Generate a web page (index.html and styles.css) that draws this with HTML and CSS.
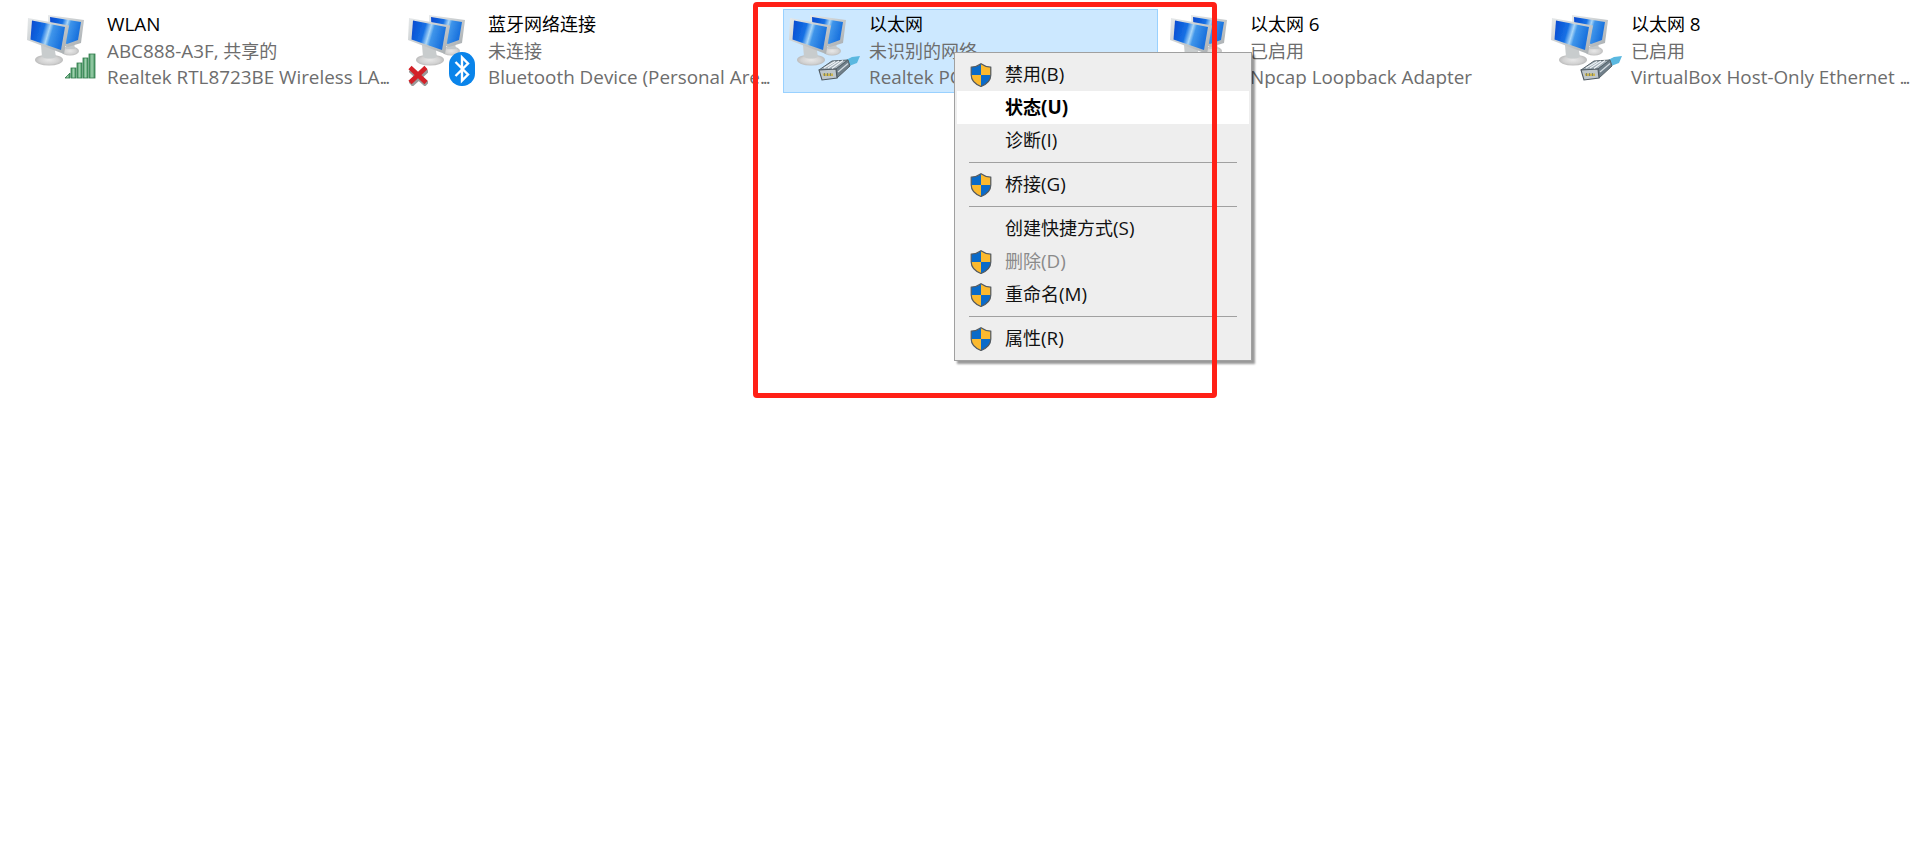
FILE: index.html
```html
<!DOCTYPE html>
<html lang="zh-CN">
<head>
<meta charset="utf-8">
<title>网络连接</title>
<link rel="stylesheet" href="styles.css">
</head>
<body>
<svg class="defs" aria-hidden="true">
  <defs>
    <linearGradient id="screen" x1="0" y1="0" x2="1" y2="0.25">
      <stop offset="0" stop-color="#0a48cf"/>
      <stop offset="0.42" stop-color="#1470e4"/>
      <stop offset="0.58" stop-color="#a9d6f7"/>
      <stop offset="0.68" stop-color="#3f95ea"/>
      <stop offset="1" stop-color="#1a72de"/>
    </linearGradient>
    <linearGradient id="frame" x1="0" y1="0" x2="1" y2="1">
      <stop offset="0" stop-color="#e6e9ea"/>
      <stop offset="1" stop-color="#a8adb0"/>
    </linearGradient>
    <radialGradient id="base">
      <stop offset="0" stop-color="#e8e8e8"/>
      <stop offset="0.7" stop-color="#d2d2d2"/>
      <stop offset="1" stop-color="#bcbcbc"/>
    </radialGradient>
    <linearGradient id="bar" x1="0" y1="0" x2="1" y2="0">
      <stop offset="0" stop-color="#3f8f5c"/>
      <stop offset="0.5" stop-color="#9dd0ac"/>
      <stop offset="1" stop-color="#3f8f5c"/>
    </linearGradient>
    <clipPath id="shieldclip"><path d="M11 .8C8 3 5 4 1.2 4.2V12C1.2 18 6 21.5 11 23.5 16 21.5 20.8 18 20.8 12V4.2C17 4 14 3 11 .8Z"/></clipPath>
    <filter id="soft" x="-5%" y="-5%" width="110%" height="110%"><feGaussianBlur stdDeviation="0.4"/></filter>

    <symbol id="pcs" viewBox="23 10 80 76">
      <g filter="url(#soft)">
        <ellipse cx="70" cy="51" rx="9" ry="4.500" fill="url(#base)"/>
        <path d="M66 42h8l1 7h-9z" fill="#c4c8ca"/>
        <path d="M48 15 84 20 81 43 68 47 49 40Z" fill="url(#frame)"/>
        <path d="M50 17 81 22 78 40 67 44 51 38Z" fill="url(#screen)"/>
        <ellipse cx="49" cy="60" rx="14" ry="5.500" fill="url(#base)"/>
        <path d="M41 45h13l2 12c-4 2-10 2-14 0z" fill="#c8cccd"/>
        <path d="M28 18 69 25.500 64 54 27 40Z" fill="url(#frame)"/>
        <path d="M32 20.500 65 27 61 50 30.500 39.500Z" fill="url(#screen)"/>
      </g>
    </symbol>

    <symbol id="shield" viewBox="0 0 22 24">
      <g clip-path="url(#shieldclip)">
        <rect width="22" height="24" fill="#0a6bc9"/>
        <rect x="11" width="11" height="12" fill="#fbb92e"/>
        <rect y="12" width="11" height="12" fill="#fbb92e"/>
      </g>
      <path d="M11 .8C8 3 5 4 1.200 4.200V12C1.200 18 6 21.500 11 23.500 16 21.500 20.800 18 20.800 12V4.200C17 4 14 3 11 .8Z" fill="none" stroke="#555b60" stroke-width="1.200"/>
    </symbol>

    <g id="plug">
      <g filter="url(#soft)">
        <path d="M84 60 90 57 98 56 95 63 87 66Z" fill="#5ab8e0"/>
        <path d="M57 70 70 61 86 60 74 69Z" fill="#9eabb4" stroke="#566269" stroke-width="1"/>
        <path d="M74 69 86 60 88 66 75 78Z" fill="#6f7f8a" stroke="#566269" stroke-width="1"/>
        <path d="M57 70 74 69 75 78 60 80Z" fill="#bfc7cc" stroke="#4f5a62" stroke-width="1.100"/>
        <path d="M60.500 73.500h10.500v2.500H61.500z" fill="#cdb650"/>
        <path d="M62.500 73v3M65.500 73v3M68.500 73v3" stroke="#6f7a70" stroke-width=".8" fill="none"/>
        <path d="M62 68 73 61.500M66 68 77 61M70 68.500 81 60.500" stroke="#f0f4f7" stroke-width="1.100" fill="none"/>
        <path d="M76 72 86 63.500" stroke="#d5dde3" stroke-width="1.200" fill="none"/>
      </g>
    </g>
  </defs>
</svg>

<main class="conn-list">
  <article class="conn">
    <svg class="conn-icon" viewBox="23 10 80 76">
      <use href="#pcs" x="23" y="10" width="80" height="76"/>
      <g filter="url(#soft)" fill="url(#bar)" stroke="#2f7a4a" stroke-width=".8">
        <path d="M65 78 70 73V78Z"/>
        <rect x="71" y="68" width="5" height="10"/>
        <rect x="77" y="63" width="5" height="15"/>
        <rect x="83" y="58" width="5" height="20"/>
        <rect x="89" y="54" width="6" height="24"/>
      </g>
    </svg>
    <div class="conn-text">
      <div class="conn-name"><span class="lat">WLAN</span></div>
      <div class="conn-line"><span class="lat">ABC888-A3F,</span> 共享的</div>
      <div class="conn-line"><span class="lat">Realtek RTL8723BE Wireless LA<span class="dots">...</span></span></div>
    </div>
  </article>

  <article class="conn">
    <svg class="conn-icon" viewBox="23 10 80 76">
      <use href="#pcs" x="23" y="10" width="80" height="76"/>
      <path d="M29.500 69.500 46 84.500M46 69.500 29.500 84.500" stroke="#9a9a9a" stroke-width="6" filter="url(#soft)" fill="none"/>
      <path d="M29 67.500 45 82.500M45 67.500 29 82.500" stroke="#d32128" stroke-width="4.600" fill="none"/>
      <rect x="68" y="52" width="26" height="34" rx="12.500" fill="#0a84ea"/>
      <path d="M74.500 62 87 74.500 81 80.500V57.500L87 63.500 74.500 76" fill="none" stroke="#fff" stroke-width="2.400"/>
    </svg>
    <div class="conn-text">
      <div class="conn-name">蓝牙网络连接</div>
      <div class="conn-line">未连接</div>
      <div class="conn-line"><span class="lat">Bluetooth Device (Personal Are<span class="dots">...</span></span></div>
    </div>
  </article>

  <article class="conn conn-selected">
    <svg class="conn-icon" viewBox="23 10 80 76">
      <use href="#pcs" x="23" y="10" width="80" height="76"/>
      <use href="#plug"/>
    </svg>
    <div class="conn-text">
      <div class="conn-name">以太网</div>
      <div class="conn-line">未识别的网络</div>
      <div class="conn-line"><span class="lat">Realtek PCIe GbE Family Contr<span class="dots">...</span></span></div>
    </div>
  </article>

  <article class="conn">
    <svg class="conn-icon" viewBox="23 10 80 76">
      <use href="#pcs" x="23" y="10" width="80" height="76"/>
      <use href="#plug"/>
    </svg>
    <div class="conn-text">
      <div class="conn-name">以太网 <span class="lat">6</span></div>
      <div class="conn-line">已启用</div>
      <div class="conn-line"><span class="lat">Npcap Loopback Adapter</span></div>
    </div>
  </article>

  <article class="conn">
    <svg class="conn-icon" viewBox="23 10 80 76">
      <use href="#pcs" x="23" y="10" width="80" height="76"/>
      <use href="#plug"/>
    </svg>
    <div class="conn-text">
      <div class="conn-name">以太网 <span class="lat">8</span></div>
      <div class="conn-line">已启用</div>
      <div class="conn-line"><span class="lat">VirtualBox Host-Only Ethernet <span class="dots">...</span></span></div>
    </div>
  </article>
</main>

<nav class="menu">
  <div class="menu-row"><svg class="shield"><use href="#shield"/></svg><span class="menu-label">禁用<span class="lat">(B)</span></span></div>
  <div class="menu-row menu-hot"><span class="menu-label menu-default">状态<span class="lat">(U)</span></span></div>
  <div class="menu-row"><span class="menu-label">诊断<span class="lat">(I)</span></span></div>
  <div class="menu-sep"></div>
  <div class="menu-row"><svg class="shield"><use href="#shield"/></svg><span class="menu-label">桥接<span class="lat">(G)</span></span></div>
  <div class="menu-sep"></div>
  <div class="menu-row"><span class="menu-label">创建快捷方式<span class="lat">(S)</span></span></div>
  <div class="menu-row"><svg class="shield"><use href="#shield"/></svg><span class="menu-label menu-disabled">删除<span class="lat">(D)</span></span></div>
  <div class="menu-row"><svg class="shield"><use href="#shield"/></svg><span class="menu-label">重命名<span class="lat">(M)</span></span></div>
  <div class="menu-sep"></div>
  <div class="menu-row"><svg class="shield"><use href="#shield"/></svg><span class="menu-label">属性<span class="lat">(R)</span></span></div>
</nav>

<div class="annotation"></div>
</body>
</html>
```
FILE: styles.css
```css
* { box-sizing: border-box; }

html, body {
  margin: 0;
  height: 845px;
  overflow: hidden;
  background: #fff;
}

body {
  padding: 9px 0 0 21px;
  font-family: "Open Sans", "Noto Sans CJK SC", sans-serif;
  font-size: 18px;
  color: #000;
}

.defs {
  position: absolute;
  width: 0;
  height: 0;
}

.conn-list {
  display: flex;
  gap: 6px;
  width: 1899px;
}

.conn {
  display: flex;
  flex: 0 0 375px;
  height: 84px;
  border: 1px solid transparent;
  padding: 0 0 0 1px;
  overflow: hidden;
}

.conn-selected {
  background: #cce8ff;
  border-color: #99d1ff;
}

.conn-icon {
  flex: 0 0 80px;
  width: 80px;
  height: 76px;
}

.conn-text {
  margin-left: 4px;
  padding-top: 2px;
  white-space: nowrap;
  line-height: 26px;
}

.conn-name {
  line-height: 24px;
  margin-bottom: 2px;
}

.conn-line { color: #6d6d6d; }

.lat { font-size: 18.85px; }

.dots { letter-spacing: -2px; }

.menu {
  position: absolute;
  left: 954px;
  top: 52px;
  width: 298px;
  height: 309px;
  padding: 5px 2px;
  background: #eee;
  border: 1px solid #a0a0a0;
  box-shadow: 3px 3px 2px rgba(0, 0, 0, 0.4);
  color: #111;
}

.menu-row {
  display: grid;
  grid-template-columns: 22px 1fr;
  column-gap: 13px;
  align-items: center;
  height: 33px;
  padding-left: 13px;
}

.menu-label {
  grid-column: 2;
  line-height: 33px;
  white-space: nowrap;
}

.menu-hot { background: #fff; }
.menu-default { font-weight: 700; color: #000; }
.menu-disabled { color: #8a8a8a; }

.shield {
  grid-column: 1;
  width: 22px;
  height: 24px;
}

.menu-sep {
  height: 1px;
  margin: 5px 12px 5px 12px;
  background: #a0a0a0;
}

.annotation {
  position: absolute;
  left: 753px;
  top: 2px;
  width: 464px;
  height: 396px;
  border: 5px solid #ff2016;
  border-radius: 4px;
}
```
